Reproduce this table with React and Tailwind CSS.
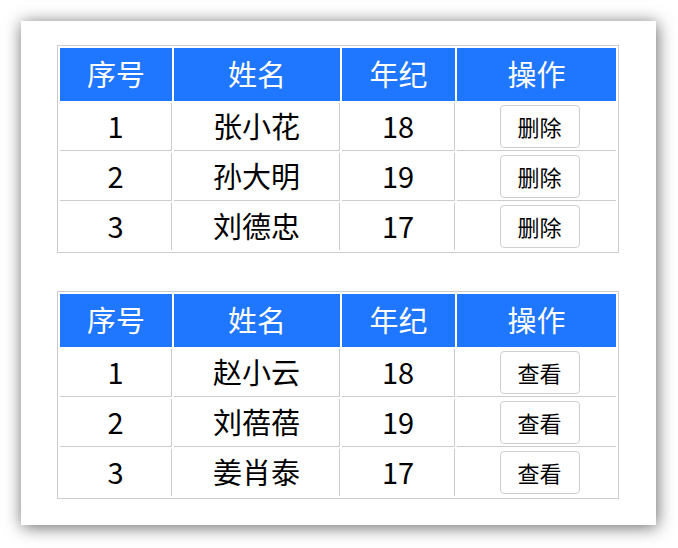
const tables = [
  {
    action: "删除",
    rows: [
      { id: 1, name: "张小花", age: 18 },
      { id: 2, name: "孙大明", age: 19 },
      { id: 3, name: "刘德忠", age: 17 },
    ],
  },
  {
    action: "查看",
    rows: [
      { id: 1, name: "赵小云", age: 18 },
      { id: 2, name: "刘蓓蓓", age: 19 },
      { id: 3, name: "姜肖泰", age: 17 },
    ],
  },
];

const widths = ["w-[112px]", "w-[166px]", "w-[113px]", "w-[159px]"];
const heads = ["序号", "姓名", "年纪", "操作"];

function DataTable({ rows, action }) {
  return (
    <table className="table-fixed w-[562px] border-separate border-spacing-[2px] border border-[#cccccc]">
      <thead>
        <tr>
          {heads.map((h, i) => (
            <th
              key={h}
              className={`${widths[i]} h-[53px] p-0 pb-[3px] bg-[#1f76ff] text-white text-[29px] leading-[40px] font-normal text-center`}
            >
              {h}
            </th>
          ))}
        </tr>
      </thead>
      <tbody>
        {rows.map((r, ri) => {
          const last = ri === rows.length - 1;
          const cell = `p-0 text-center text-[29px] leading-[40px] text-black ${last ? "h-[47px]" : "h-[48px] border-b border-[#cccccc]"}`;
          return (
            <tr key={r.id}>
              <td className={`${cell} pb-[3px] border-r border-r-[#cccccc]`}>{r.id}</td>
              <td className={`${cell} pb-[3px] border-r border-r-[#cccccc]`}>{r.name}</td>
              <td className={`${cell} pb-[3px] border-r border-r-[#cccccc]`}>{r.age}</td>
              <td className={cell}>
                <div className="flex justify-center pl-[6px]">
                  <button className="w-[80px] h-[43px] flex items-center justify-center pb-[2px] bg-white border border-[#cfcfcf] rounded-[4px] text-[22px] text-black leading-none">
                    {action}
                  </button>
                </div>
              </td>
            </tr>
          );
        })}
      </tbody>
    </table>
  );
}

export default function App() {
  return (
    <div
      className="w-[678px] h-[548px] bg-white pt-[21px] pl-[21px]"
      style={{ fontFamily: '"Noto Sans CJK SC", "Noto Sans", sans-serif' }}
    >
      <div className="w-[635px] h-[504px] bg-white shadow-[1px_2px_16px_rgba(0,0,0,0.6)] pt-[24px] pl-[36px] flex flex-col gap-[38px]">
        {tables.map((t, i) => (
          <DataTable key={i} rows={t.rows} action={t.action} />
        ))}
      </div>
    </div>
  );
}
